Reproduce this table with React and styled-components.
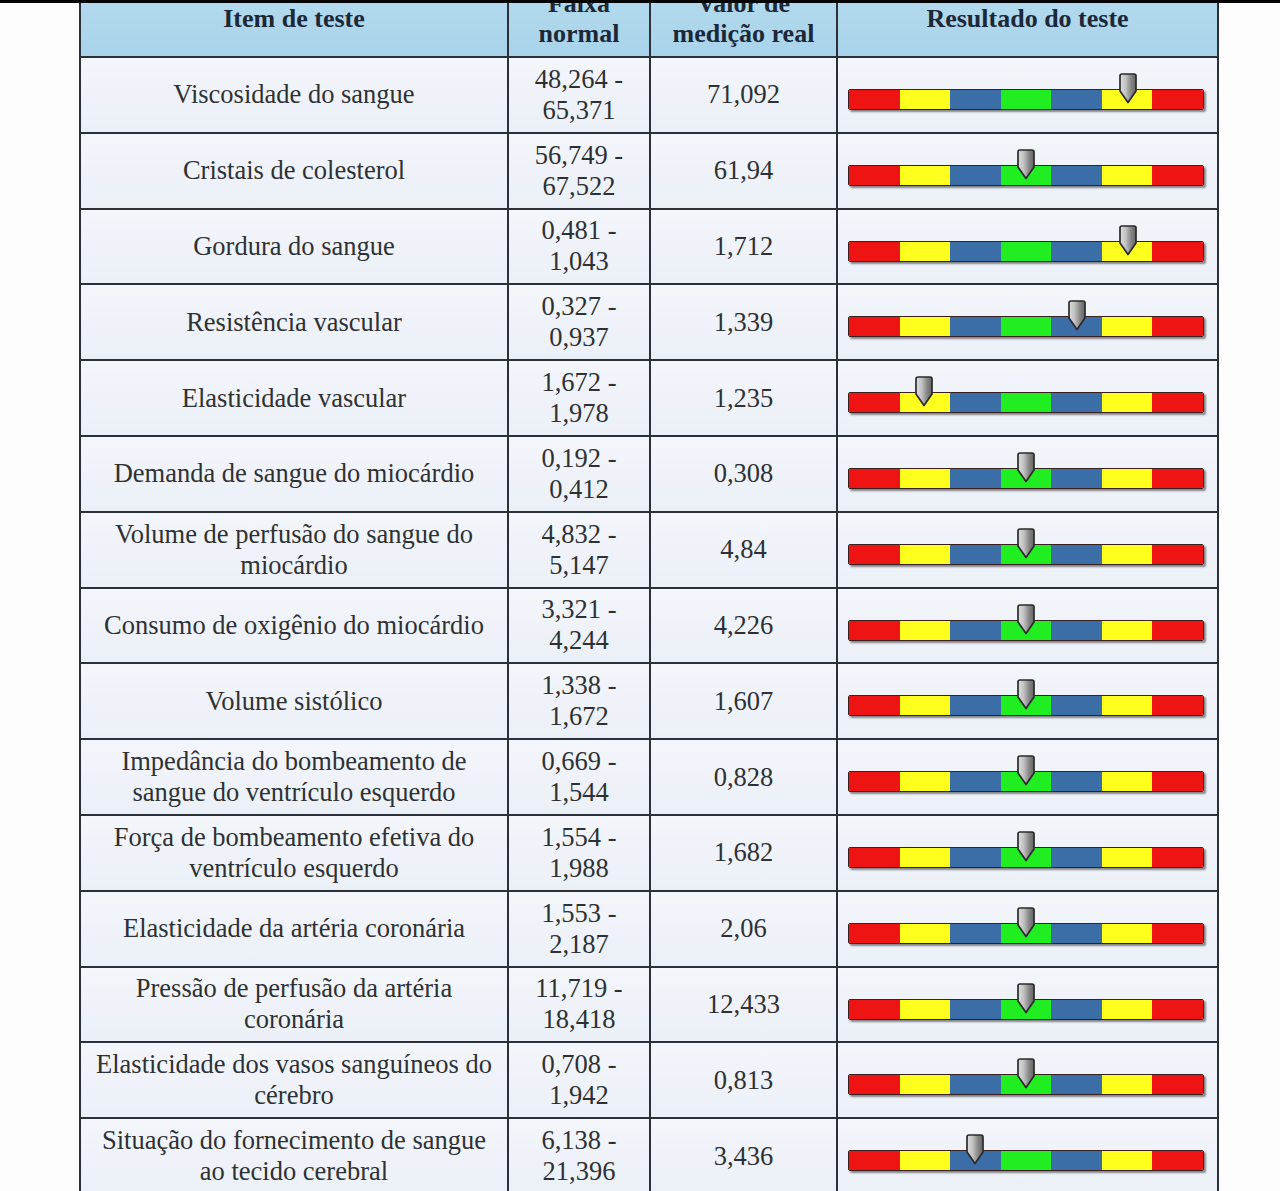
import React from 'react';
import styled, { createGlobalStyle } from 'styled-components';

const GlobalStyle = createGlobalStyle`
  html, body {
    margin: 0;
    padding: 0;
    background: #ffffff;
  }
  body {
    font-family: "Liberation Serif", "Times New Roman", serif;
  }
`;

const Page = styled.div`
  width: 1280px;
  height: 1191px;
  overflow: hidden;
  background: #fdfdfd;
`;

const TopStrip = styled.div`
  position: relative;
  z-index: 2;
  height: 3px;
  background: #050505;
`;

const Table = styled.div`
  display: grid;
  grid-template-columns: 426px 140px 185px 379px;
  grid-template-rows: 71px;
  grid-auto-rows: 73.8px;
  gap: 2px;
  padding: 2px;
  width: max-content;
  margin: -20px 0 0 79px;
  background: #2b3139;
`;

const HeadCell = styled.div`
  display: flex;
  align-items: center;
  justify-content: center;
  box-sizing: border-box;
  padding-bottom: 4px;
  text-align: center;
  background: linear-gradient(#b6dcef, #a8d3ea);
  color: #1c2838;
  font-weight: bold;
  font-size: 26px;
  line-height: 30px;
  white-space: pre-line;
`;

const Cell = styled.div`
  display: flex;
  align-items: center;
  justify-content: center;
  text-align: center;
  background: linear-gradient(#f3f6fb, #ebf0f7);
  color: #2e3134;
  font-size: 26.5px;
  line-height: 31px;
  white-space: pre-line;
`;

const ResultCell = styled.div`
  position: relative;
  background: linear-gradient(#f3f6fb, #ebf0f7);
  padding: 31px 0 0 10px;
`;

const Bar = styled.div`
  display: flex;
  width: 356px;
  height: 21px;
  box-sizing: border-box;
  border: 1.5px solid #3a1f1f;
  border-radius: 2px;
  overflow: hidden;
  box-shadow: 2px 2px 2px rgba(0, 0, 0, 0.45);
`;

const Segment = styled.div`
  flex: 1;
  background: ${(p) => p.$color};
`;

const Marker = styled.svg`
  position: absolute;
  top: 15px;
  left: ${(p) => 10 + p.$seg * (356 / 7) + 356 / 14 - 10}px;
  width: 20px;
  height: 31px;
`;

const SEGMENTS = ['#ee1414', '#ffff1e', '#3b6da6', '#20ee20', '#3b6da6', '#ffff1e', '#ee1414'];

const rows = [
  ['Viscosidade do sangue', '48,264 -\n65,371', '71,092', 5],
  ['Cristais de colesterol', '56,749 -\n67,522', '61,94', 3],
  ['Gordura do sangue', '0,481 -\n1,043', '1,712', 5],
  ['Resistência vascular', '0,327 -\n0,937', '1,339', 4],
  ['Elasticidade vascular', '1,672 -\n1,978', '1,235', 1],
  ['Demanda de sangue do miocárdio', '0,192 -\n0,412', '0,308', 3],
  ['Volume de perfusão do sangue do\nmiocárdio', '4,832 -\n5,147', '4,84', 3],
  ['Consumo de oxigênio do miocárdio', '3,321 -\n4,244', '4,226', 3],
  ['Volume sistólico', '1,338 -\n1,672', '1,607', 3],
  ['Impedância do bombeamento de\nsangue do ventrículo esquerdo', '0,669 -\n1,544', '0,828', 3],
  ['Força de bombeamento efetiva do\nventrículo esquerdo', '1,554 -\n1,988', '1,682', 3],
  ['Elasticidade da artéria coronária', '1,553 -\n2,187', '2,06', 3],
  ['Pressão de perfusão da artéria\ncoronária', '11,719 -\n18,418', '12,433', 3],
  ['Elasticidade dos vasos sanguíneos do\ncérebro', '0,708 -\n1,942', '0,813', 3],
  ['Situação do fornecimento de sangue\nao tecido cerebral', '6,138 -\n21,396', '3,436', 2],
];

const Pointer = ({ seg, id }) => (
  <Marker $seg={seg} viewBox="0 0 20 31">
    <defs>
      <linearGradient id={id} x1="0" x2="1" y1="0" y2="0">
        <stop offset="0" stopColor="#dedede" />
        <stop offset="0.35" stopColor="#c2c2c2" />
        <stop offset="0.7" stopColor="#858585" />
        <stop offset="1" stopColor="#656565" />
      </linearGradient>
    </defs>
    <path
      d="M2 3 Q2 1 4 1 H16 Q18 1 18 3 V18 L10 29.5 L2 18 Z"
      fill={`url(#${id})`}
      stroke="#2a2a2a"
      strokeWidth="1.7"
      strokeLinejoin="round"
    />
  </Marker>
);

const App = () => {
  return (
    <Page>
      <GlobalStyle />
      <TopStrip />
      <Table>
        <HeadCell>Item de teste</HeadCell>
        <HeadCell>{'Faixa\nnormal'}</HeadCell>
        <HeadCell>{'Valor de\nmedição real'}</HeadCell>
        <HeadCell>Resultado do teste</HeadCell>
        {rows.map(([name, range, value, seg], i) => (
          <React.Fragment key={i}>
            <Cell>{name}</Cell>
            <Cell>{range}</Cell>
            <Cell>{value}</Cell>
            <ResultCell>
              <Bar>
                {SEGMENTS.map((c, j) => (
                  <Segment key={j} $color={c} />
                ))}
              </Bar>
              <Pointer seg={seg} id={`mg${i}`} />
            </ResultCell>
          </React.Fragment>
        ))}
      </Table>
    </Page>
  );
};

export default App;
